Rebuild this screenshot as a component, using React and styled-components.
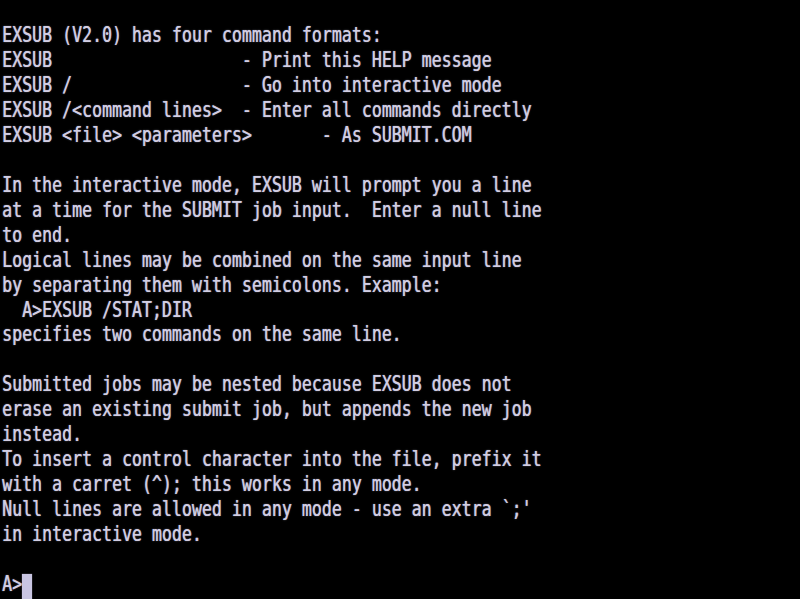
import * as React from 'react'
import styled, { createGlobalStyle } from 'styled-components'

const GlobalStyle = createGlobalStyle`
  html, body {
    margin: 0;
    padding: 0;
    background: #000;
  }
`

const Screen = styled.main`
  width: 800px;
  height: 599px;
  overflow: hidden;
  background: #000;
  display: grid;
  grid-template-rows: repeat(24, 1fr);
  padding-left: 2px;
  box-sizing: border-box;
`

const Row = styled.div`
  height: 24.96px;
  overflow: visible;
  display: flex;
  align-items: flex-start;
`

const Text = styled.span`
  display: inline-block;
  white-space: pre;
  font-family: 'DejaVu Sans Mono', 'Liberation Mono', monospace;
  font-size: 16.6px;
  line-height: 16.6px;
  margin-top: 1px;
  color: #d2cee4;
  text-shadow: 0.4px 0 0 rgba(210, 206, 228, 0.7), 0 0 1.5px rgba(210, 206, 228, 0.5);
  transform: scaleY(1.25);
  transform-origin: top left;
`

const Cursor = styled.span`
  display: inline-block;
  width: 10px;
  height: 25px;
  background: #c9c5e2;
  box-shadow: 0 0 1px rgba(201, 197, 226, 0.7);
`

const lines = [
  '',
  'EXSUB (V2.0) has four command formats:',
  'EXSUB                   - Print this HELP message',
  'EXSUB /                 - Go into interactive mode',
  'EXSUB /<command lines>  - Enter all commands directly',
  'EXSUB <file> <parameters>       - As SUBMIT.COM',
  '',
  'In the interactive mode, EXSUB will prompt you a line',
  'at a time for the SUBMIT job input.  Enter a null line',
  'to end.',
  'Logical lines may be combined on the same input line',
  'by separating them with semicolons. Example:',
  '  A>EXSUB /STAT;DIR',
  'specifies two commands on the same line.',
  '',
  'Submitted jobs may be nested because EXSUB does not',
  'erase an existing submit job, but appends the new job',
  'instead.',
  'To insert a control character into the file, prefix it',
  'with a carret (^); this works in any mode.',
  "Null lines are allowed in any mode - use an extra `;'",
  'in interactive mode.',
  '',
]

export default function App() {
  return (
    <>
      <GlobalStyle />
      <Screen>
        {lines.map((line, i) => (
          <Row key={i}>
            <Text>{line}</Text>
          </Row>
        ))}
        <Row>
          <Text>A&gt;</Text>
          <Cursor />
        </Row>
      </Screen>
    </>
  )
}
